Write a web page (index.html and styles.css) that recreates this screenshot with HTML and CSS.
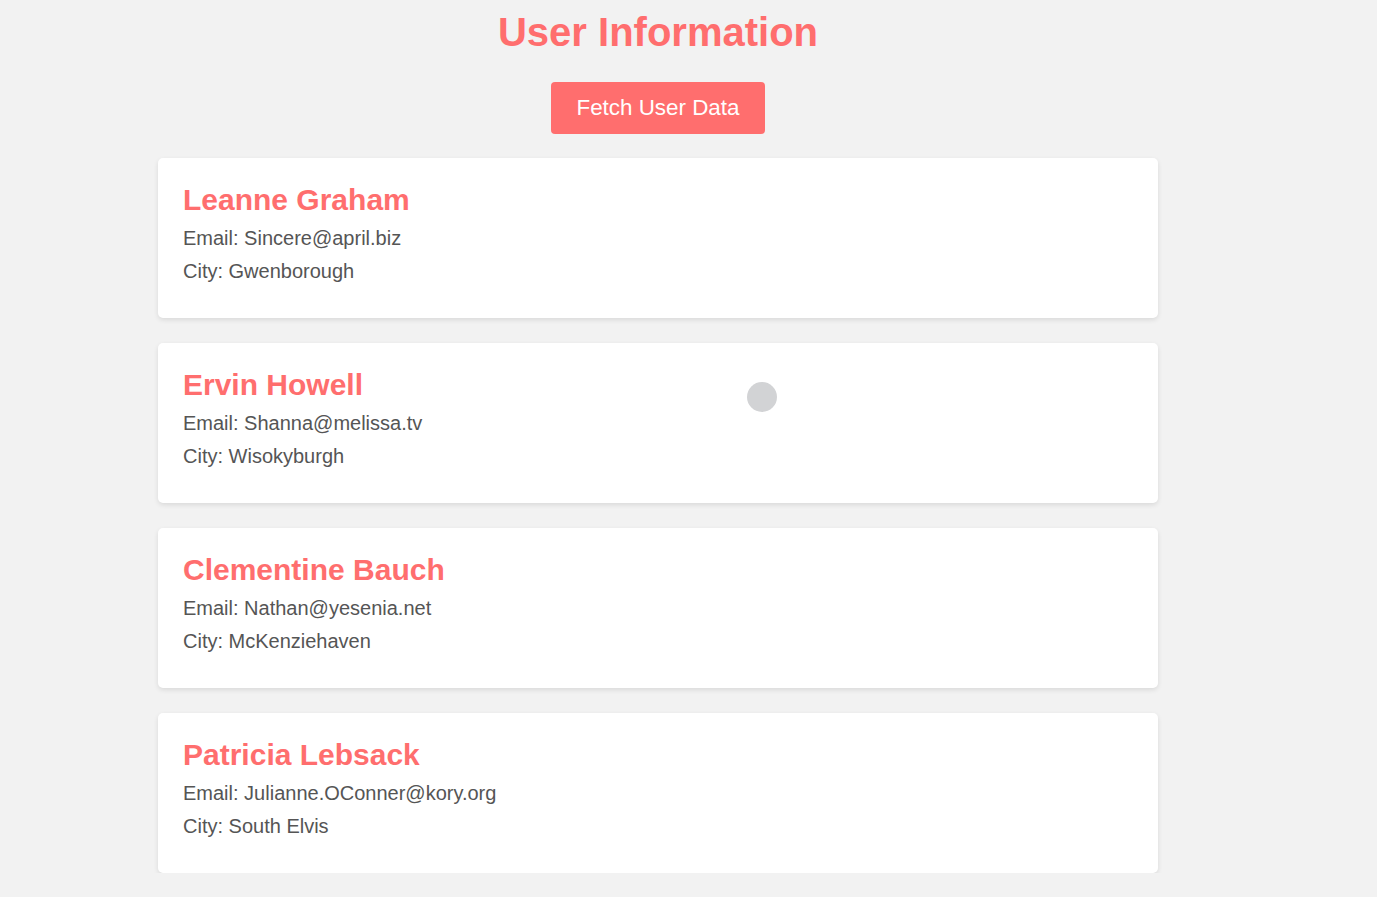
FILE: index.html
```html
<!DOCTYPE html>
<html lang="en">
<head>
<meta charset="utf-8">
<title>User Information</title>
<link rel="stylesheet" href="styles.css">
</head>
<body>
<div class="container">
  <h1 class="title">User Information</h1>
  <div class="actions">
    <button class="fetch-btn" type="button">Fetch User Data</button>
  </div>
  <div class="user-list">
    <div class="user-card">
      <h2 class="user-name">Leanne Graham</h2>
      <p class="user-field">Email: Sincere@april.biz</p>
      <p class="user-field">City: Gwenborough</p>
    </div>
    <div class="user-card">
      <h2 class="user-name">Ervin Howell</h2>
      <p class="user-field">Email: Shanna@melissa.tv</p>
      <p class="user-field">City: Wisokyburgh</p>
    </div>
    <div class="user-card">
      <h2 class="user-name">Clementine Bauch</h2>
      <p class="user-field">Email: Nathan@yesenia.net</p>
      <p class="user-field">City: McKenziehaven</p>
    </div>
    <div class="user-card">
      <h2 class="user-name">Patricia Lebsack</h2>
      <p class="user-field">Email: Julianne.OConner@kory.org</p>
      <p class="user-field">City: South Elvis</p>
    </div>
  </div>
</div>
<div class="cursor-dot"></div>
</body>
</html>
```

FILE: styles.css
```css
html, body {
  margin: 0;
  padding: 0;
}
body {
  background: #f2f2f2;
  font-family: "Liberation Sans", Arial, sans-serif;
  color: #555;
  overflow: hidden;
}
.container {
  width: 1000px;
  margin-left: 158px;
  padding-top: 10px;
}
.title {
  margin: 0 0 27px;
  text-align: center;
  font-size: 40px;
  font-weight: bold;
  color: #ff6e6e;
}
.actions {
  display: flex;
  justify-content: center;
  margin-bottom: 24px;
}
.fetch-btn {
  background: #ff6e6e;
  color: #fff;
  border: none;
  border-radius: 4px;
  padding: 13px 25px;
  font-family: "Liberation Sans", Arial, sans-serif;
  font-size: 22.4px;
  line-height: normal;
  cursor: pointer;
}
.user-list {
  display: flex;
  flex-direction: column;
  gap: 25px;
}
.user-card {
  background: #fff;
  border-radius: 5px;
  padding: 25px;
  box-shadow: 0 2px 5px rgba(0, 0, 0, 0.1);
}
.user-name {
  margin: 0 0 10px;
  font-size: 30px;
  font-weight: bold;
  color: #ff6e6e;
}
.user-field {
  margin: 10px 0;
  font-size: 20px;
  color: #555;
}
.cursor-dot {
  position: absolute;
  left: 747px;
  top: 382px;
  width: 30px;
  height: 30px;
  border-radius: 50%;
  background: #d2d3d5;
}
```
